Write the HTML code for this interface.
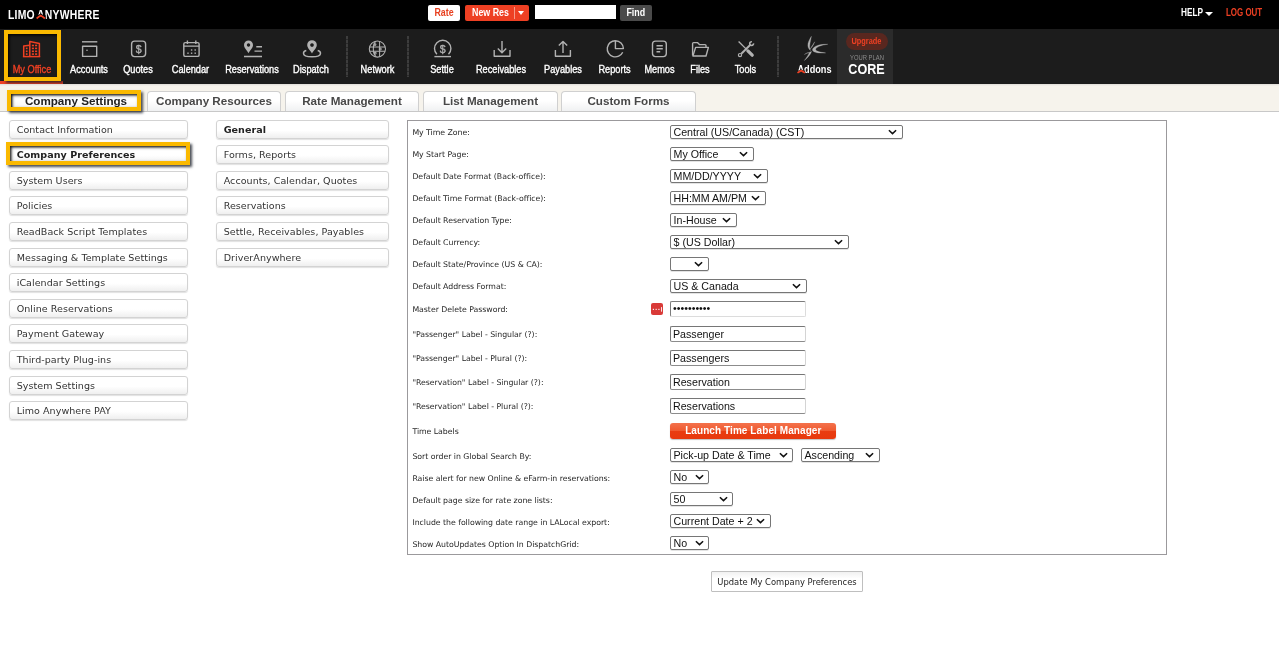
<!DOCTYPE html>
<html lang="en">
<head>
<meta charset="utf-8">
<title>Limo Anywhere - Company Preferences</title>
<style>
*{box-sizing:border-box;}
html,body{margin:0;padding:0;}
body{will-change:transform;width:1279px;height:662px;overflow:hidden;background:#fff;font-family:"Liberation Sans",sans-serif;position:relative;}
#topbar{position:absolute;left:0;top:0;width:1279px;height:29px;background:#000;}
#logo{position:absolute;left:7.8px;top:7.5px;color:#fff;font-weight:bold;font-size:12.1px;line-height:14px;letter-spacing:0.3px;white-space:nowrap;transform:scaleX(.857);transform-origin:0 0;}
#logo .a{position:relative;display:inline-block;margin-left:-1.2px;}
#logo .a svg{position:absolute;left:-1px;top:0;width:11px;height:14px;overflow:visible;}
.tb{position:absolute;top:5px;height:16px;line-height:16px;font-size:10.2px;font-weight:bold;border-radius:2px;text-align:center;white-space:nowrap;}
.t{display:inline-block;transform:scaleX(.87);}
#rate{left:428px;width:32px;background:#fff;color:#e8401f;}
#newres{left:465px;width:64px;background:#ee4023;color:#fff;text-align:left;padding-left:7px;}
#newres .div{position:absolute;left:49px;top:2px;width:1px;height:12px;background:#f59a86;}
#newres .car{position:absolute;left:53px;top:6.2px;width:0;height:0;border-left:3.7px solid transparent;border-right:3.7px solid transparent;border-top:4.2px solid #fff;}
#search{position:absolute;left:535px;top:5px;width:81px;height:14px;background:#fff;}
#find{left:620px;width:32px;background:#4a4a4a;color:#fff;}
#help{position:absolute;left:1180.5px;top:7.2px;color:#fff;font-weight:bold;font-size:10.4px;line-height:12px;white-space:nowrap;}
#help .car{position:absolute;left:24.6px;top:4.7px;width:0;height:0;border-left:4px solid transparent;border-right:4px solid transparent;border-top:4px solid #fff;}
#logout{position:absolute;left:1225.6px;top:7.2px;color:#ee4023;font-weight:bold;font-size:10.4px;line-height:12px;white-space:nowrap;}

#nav{position:absolute;left:0;top:29px;width:1279px;height:55px;background:#1c1c1c;}
.ni{position:absolute;top:0;height:54px;color:#fff;font-size:10px;text-align:center;white-space:nowrap;}
.ni span{position:absolute;left:-20px;right:-20px;top:35px;line-height:12px;text-align:center;transform:scaleX(.92);-webkit-text-stroke:0.35px #fff;}
.sep{position:absolute;top:6.7px;height:41.6px;width:1.5px;background:repeating-linear-gradient(#3d3d3d 0,#3d3d3d 3px,#2a2a2a 3px,#2a2a2a 4px);}
#addons{top:34.6px !important;font-weight:bold;font-size:10.2px;transform:scaleX(.9) !important;-webkit-text-stroke:0 !important;}
#addons .a{position:relative;display:inline-block;}
#addons .a svg{position:absolute;left:0;top:0;width:9px;height:12px;overflow:visible;}
#plan{position:absolute;left:837px;top:0;width:56px;height:55px;background:#2b2b2b;}
#upg{position:absolute;left:9px;top:4px;width:41.5px;height:16.8px;border-radius:8.4px;background:#59271f;color:#ee4023;font-size:8.6px;font-weight:bold;line-height:16.8px;text-align:center;}
#upg span{display:inline-block;transform:scaleX(.86);}
#yp{position:absolute;left:-3.4px;right:-6.6px;top:24.6px;font-size:7px;line-height:8px;color:#8c8c8c;text-align:center;transform:scaleX(.835);}
#core{position:absolute;left:-2.8px;right:-6.2px;top:32px;font-size:14.8px;line-height:16px;font-weight:bold;color:#fff;text-align:center;transform:scaleX(.85);}
#hl1{position:absolute;left:4.3px;top:29.5px;width:56.6px;height:51.3px;border:4px solid #fab900;box-shadow:2px 2px 2.5px rgba(25,30,40,.8),inset 1.5px 1.5px 2.5px rgba(0,0,0,.9);}
#redline{position:absolute;left:0;top:81px;width:62.5px;height:3px;background:#ee4023;}

#tabs{position:absolute;left:0;top:84px;width:1279px;height:28px;background:linear-gradient(#dedcd7 0,#f6f3ec 2px);border-bottom:1px solid #c8c8c8;}
.tab{position:absolute;top:7px;height:20px;border:1px solid #d0d0d0;border-bottom:none;border-radius:4px 4px 0 0;background:linear-gradient(#fff 45%,#f0f1f2);color:#484848;font-weight:bold;font-size:11.65px;line-height:18px;text-align:center;white-space:nowrap;}
#hl2{position:absolute;left:7px;top:90px;width:133.8px;height:20.7px;border:4.2px solid #fab900;box-shadow:2px 2px 2.5px rgba(25,30,40,.8),inset 1.5px 1.5px 2.5px rgba(0,0,0,.9);}

.mi{position:absolute;height:18.6px;border:1px solid #d3d3d3;border-radius:3px;background:linear-gradient(#fff 0%,#fff 55%,#efefef 100%);box-shadow:0 1px 1px rgba(0,0,0,.12);font-family:"DejaVu Sans","Liberation Sans",sans-serif;font-size:9.55px;letter-spacing:0.04px;line-height:17px;color:#333;padding-left:6.7px;white-space:nowrap;}
.mi.l{left:9px;width:179px;}
.mi.r{left:216px;width:173px;}
.mi.b{font-weight:bold;color:#222;}
#hl3{position:absolute;left:6.2px;top:142px;width:183.6px;height:23.3px;border:4px solid #fab900;box-shadow:2px 2px 2.5px rgba(25,30,40,.8),inset 1.5px 1.5px 2.5px rgba(0,0,0,.9);}

#panel{position:absolute;left:407px;top:120px;width:760px;height:435px;border:1px solid #9b999c;background:#fff;}
.lb{position:absolute;left:412.4px;font-family:"DejaVu Sans",sans-serif;font-size:7.8px;letter-spacing:-0.03px;margin-top:0.6px;line-height:12px;color:#262626;white-space:nowrap;}
.sel{position:absolute;left:670px;height:13.8px;border:1px solid #767676;border-radius:2px;box-shadow:0 1px 0 #e3e3e3;background:#fff;font-size:10.67px;line-height:12px;color:#111;padding-left:2.5px;white-space:nowrap;overflow:hidden;}
.sel svg{position:absolute;right:4.6px;top:3.4px;width:9px;height:6px;}
.inp{position:absolute;left:670px;width:135.5px;height:16.3px;border:1px solid;border-color:#767676 #d4d4d4 #8c8c8c #767676;border-radius:2px;background:#fff;font-size:10.67px;line-height:14px;color:#111;padding-left:2px;white-space:nowrap;}
#launch{position:absolute;left:670.4px;top:423.2px;width:165.8px;height:15.8px;border-radius:3px;background:linear-gradient(#f4724c 0%,#ef5a30 48%,#e93c10 52%,#e8380d 100%);color:#fff;font-weight:bold;font-size:10px;letter-spacing:0.08px;line-height:16.3px;text-align:center;box-shadow:0 1px 1px rgba(0,0,0,.25);}
#upd{position:absolute;left:711px;top:571px;width:152px;height:21px;border:1px solid #bfbfbf;border-radius:1px;background:linear-gradient(#f1f1f1 0,#fff 35%);font-family:"DejaVu Sans Condensed","DejaVu Sans",sans-serif;font-size:9.3px;line-height:19px;color:#222;text-align:center;white-space:nowrap;}
.pwd{line-height:12.6px !important;border-color:#7c7c7c #dcdcdc #dcdcdc #7c7c7c !important;}
#pw{position:absolute;left:650.6px;top:302.8px;width:12.4px;height:12.4px;border-radius:2px;background:#d93a38;}
#pw svg{display:block;width:100%;height:100%;}
</style>
</head>
<body>
<div id="topbar">
  <div id="logo">LIMO <span class="a">A<svg viewBox="0 0 11 14"><path d="M-0.5 12 L-0.5 7.2 L2 7.2 Q5.2 5 8.4 7.2 L11 7.2 L11 12 Z" fill="#000"/><path d="M0.4 10.5 Q3 8.5 5.2 7.6 Q7.4 8.5 10 10.5" fill="none" stroke="#ee4023" stroke-width="2"/></svg></span>NYWHERE</div>
  <div class="tb" id="rate"><span class="t">Rate</span></div>
  <div class="tb" id="newres"><span class="t" style="transform-origin:0 50%">New Res</span><i class="div"></i><i class="car"></i></div>
  <div id="search"></div>
  <div class="tb" id="find"><span class="t">Find</span></div>
  <div id="help"><span class="t" style="transform:scaleX(.795);transform-origin:0 50%">HELP</span><i class="car"></i></div>
  <div id="logout"><span class="t" style="transform:scaleX(.765);transform-origin:0 50%">LOG OUT</span></div>
</div>
<div id="nav">
<svg id="icons" width="1279" height="54" viewBox="0 29 1279 54" style="position:absolute;left:0;top:0" fill="none" stroke="#b2b2b2" stroke-width="1.4" stroke-linejoin="round" stroke-linecap="butt"><g stroke="#ee4023" stroke-width="1.5"><path d="M29.8 57 V41.6 L39.4 43.6 V57"/><path d="M23.7 57 V46 L29.8 45.3"/><path d="M22.9 56.6 H40.2"/></g><g fill="#ee4023" stroke="none"><rect x="31.85" y="44.70" width="2.1" height="1.6"/><rect x="31.85" y="47.60" width="2.1" height="1.6"/><rect x="31.85" y="50.50" width="2.1" height="1.6"/><rect x="31.85" y="53.30" width="2.1" height="1.6"/><rect x="35.05" y="44.70" width="2.1" height="1.6"/><rect x="35.05" y="47.60" width="2.1" height="1.6"/><rect x="35.05" y="50.50" width="2.1" height="1.6"/><rect x="35.05" y="53.30" width="2.1" height="1.6"/><rect x="25.85" y="47.60" width="1.7" height="1.6"/><rect x="25.85" y="50.50" width="1.7" height="1.6"/><rect x="25.85" y="53.30" width="1.7" height="1.6"/></g><path d="M82 41.8 H97.3"/><rect x="82.6" y="46.2" width="14.1" height="10.2"/><circle cx="87" cy="50.3" r="0.8" fill="#b2b2b2" stroke="none"/><rect x="131.6" y="41.1" width="14" height="15.5" rx="3"/><text x="138.6" y="52.6" font-family="Liberation Sans, sans-serif" font-size="10.5" text-anchor="middle" fill="#b2b2b2" stroke="#b2b2b2" stroke-width="0.35">$</text><rect x="183.8" y="42.6" width="15.3" height="13.8" rx="1.5"/><path d="M183.8 46.1 H199.1 M187.4 40.5 V44 M195.8 40.5 V44"/><g fill="#b2b2b2" stroke="none"><rect x="187.3" y="52.5" width="1.4" height="1.4"/><rect x="190.9" y="52.5" width="1.4" height="1.4"/><rect x="194.5" y="52.5" width="1.4" height="1.4"/><rect x="190.9" y="49.3" width="1.4" height="1.4"/><rect x="194.5" y="49.3" width="1.4" height="1.4"/></g><path fill="#b2b2b2" stroke="none" fill-rule="evenodd" d="M248.50 53.20 C247.30 50.70 244.00 48.20 244.00 45.00 A4.50 4.50 0 1 1 253.00 45.00 C253.00 48.20 249.70 50.70 248.50 53.20 Z M248.50 43.30 a1.70 1.70 0 1 0 0.01 0 Z"/><path stroke-width="1.4" d="M256.3 46.8 H262 M254.5 51.1 H262 M244 56.5 H262"/><path fill="#b2b2b2" stroke="none" fill-rule="evenodd" d="M312.00 53.40 C310.80 50.90 307.20 48.20 307.20 45.00 A4.80 4.80 0 1 1 316.80 45.00 C316.80 48.20 313.20 50.90 312.00 53.40 Z M312.00 43.20 a1.80 1.80 0 1 0 0.01 0 Z"/><path stroke-width="1.5" d="M306.3 50.4 C304 51 303.5 52.2 303.5 53.2 C303.5 55.4 307.3 56.8 312 56.8 C316.7 56.8 320.5 55.4 320.5 53.2 C320.5 52.2 320 51 317.7 50.4"/><g stroke-width="1.05"><circle cx="377.4" cy="49" r="8.1"/><path d="M369.8 46.9 H385 M369.8 51.2 H385 M379.6 41.2 V56.8 M376 41.2 C372.6 43.5 372.2 54 376.2 56.8"/><circle cx="375" cy="44.6" r="0.9"/><circle cx="380.2" cy="49" r="1"/><circle cx="375.2" cy="53.2" r="0.9"/></g><path d="M436.9 54.3 A8.2 8.2 0 1 1 448.5 54.3"/><path d="M434.4 56.6 H451"/><text x="442.7" y="53" font-family="Liberation Sans, sans-serif" font-size="10.5" text-anchor="middle" fill="#b2b2b2" stroke="#b2b2b2" stroke-width="0.35">$</text><path stroke-width="1.4" d="M494.2 50 V56.2 H510 V50 M502 41 V52.6 M497.8 48.6 L502 52.8 L506.2 48.6"/><path stroke-width="1.4" d="M555.4 50 V56.2 H570.4 V50 M563 53 V41.6 M558.8 45.6 L563 41.4 L567.2 45.6"/><path d="M615.4 40.7 A8.1 8.1 0 1 0 622.7 52.2"/><path d="M615.4 40.7 V48.6 H623.4 A8 8 0 0 0 615.4 40.7 Z"/><rect x="652.5" y="41.1" width="13.8" height="15.5" rx="3"/><path stroke-width="1.4" d="M656.5 45.8 H662.8 M656.5 48.7 H662.8 M656.5 51.7 H660.2"/><path d="M692.6 55.4 V43.6 Q692.6 42.6 693.6 42.6 H697.4 L699.4 44.6 H705 Q706 44.6 706 45.6 V47.4"/><path d="M695.6 47.4 H708.4 L706 56 H692.9 Z"/><path stroke-width="1.3" d="M738.6 41.5 L746.8 49.6"/><path stroke-width="3.3" stroke-linecap="round" d="M747.9 50.9 L752.2 55.2"/><path stroke-width="1.9" d="M750.4 44.8 L741.3 53.8"/><circle cx="740" cy="55.1" r="1.6" stroke-width="1.2"/><path stroke-width="1.6" d="M753.5 43.3 A1.9 1.9 0 1 1 751.9 41.7"/><g fill="#b0b0b0" stroke="#b0b0b0" stroke-width="0.3"><path d="M827.8 44.3 C820 44 813.3 45.8 812.4 50 C813.4 52.8 819 53.4 825.6 52.9 C820 52.2 816 51.3 815.6 49.6 C816 47 821 45.2 827.8 44.3 Z"/><path d="M811.4 36.3 C809.4 39.5 807.5 43 807.9 46 C808.2 48 809.1 49.5 810.5 50.4 C809.7 48.5 809.6 46.7 809.8 45 C810.1 42 810.9 39.4 811.4 36.3 Z"/><path d="M814.7 41.8 C813.2 44.2 811.5 46.6 810 49.2 C811.6 47.8 813.6 45 814.7 41.8 Z"/><path d="M811.6 51.4 C810.6 54.6 807.6 57.9 804.3 60.5 C806.4 58 808.4 55 809.4 52.2 Z"/><path d="M804.4 54.5 C806 53.2 807.6 52.5 809.2 52.5 C807.6 52.9 806 53.6 804.4 54.5 Z"/></g></svg>
  <div class="ni" style="left:12px;width:40px;color:#ee4023"><span style="-webkit-text-stroke-color:#ee4023">My Office</span></div>
  <div class="ni" style="left:70px;width:38px"><span>Accounts</span></div>
  <div class="ni" style="left:123px;width:30px"><span>Quotes</span></div>
  <div class="ni" style="left:172px;width:37px"><span>Calendar</span></div>
  <div class="ni" style="left:225px;width:54px"><span>Reservations</span></div>
  <div class="ni" style="left:293px;width:36px"><span>Dispatch</span></div>
  <div class="sep" style="left:346px"></div>
  <div class="ni" style="left:360px;width:35px"><span>Network</span></div>
  <div class="sep" style="left:407.4px"></div>
  <div class="ni" style="left:430px;width:24px"><span>Settle</span></div>
  <div class="ni" style="left:476px;width:50px"><span>Receivables</span></div>
  <div class="ni" style="left:544px;width:38px"><span>Payables</span></div>
  <div class="ni" style="left:598px;width:33px"><span>Reports</span></div>
  <div class="ni" style="left:644px;width:31px"><span>Memos</span></div>
  <div class="ni" style="left:690px;width:20px"><span>Files</span></div>
  <div class="ni" style="left:734px;width:23px"><span>Tools</span></div>
  <div class="sep" style="left:777.4px"></div>
  <div class="ni" style="left:797px;width:35px"><span id="addons"><b class="a">A<svg viewBox="0 0 9 12"><path d="M-0.6 10 L-0.6 6.4 L1.4 6.4 Q3.7 4.6 6 6.4 L8.2 6.4 L8.2 10 Z" fill="#1c1c1c"/><path d="M-0.4 8.9 Q1.8 7.3 3.7 6.6 Q5.6 7.3 7.8 8.9" fill="none" stroke="#ee4023" stroke-width="1.7"/></svg></b>ddons</span></div>
  <div id="plan"><div id="upg"><span>Upgrade</span></div><div id="yp">YOUR PLAN</div><div id="core">CORE</div></div>
</div>
<div id="redline"></div>
<div id="hl1"></div>
<div id="tabs">
  <div class="tab" style="left:11px;width:130px;color:#222">Company Settings</div>
  <div class="tab" style="left:147px;width:134px">Company Resources</div>
  <div class="tab" style="left:285px;width:134px">Rate Management</div>
  <div class="tab" style="left:423px;width:135px">List Management</div>
  <div class="tab" style="left:561px;width:135px">Custom Forms</div>
</div>
<div id="hl2"></div>

<div class="mi l" style="top:120px">Contact Information</div>
<div class="mi l b" style="top:145px">Company Preferences</div>
<div class="mi l" style="top:171px">System Users</div>
<div class="mi l" style="top:196px">Policies</div>
<div class="mi l" style="top:222px">ReadBack Script Templates</div>
<div class="mi l" style="top:248px">Messaging &amp; Template Settings</div>
<div class="mi l" style="top:273px">iCalendar Settings</div>
<div class="mi l" style="top:299px">Online Reservations</div>
<div class="mi l" style="top:324px">Payment Gateway</div>
<div class="mi l" style="top:350px">Third-party Plug-ins</div>
<div class="mi l" style="top:376px">System Settings</div>
<div class="mi l" style="top:401px">Limo Anywhere PAY</div>
<div id="hl3"></div>

<div class="mi r b" style="top:120px">General</div>
<div class="mi r" style="top:145px">Forms, Reports</div>
<div class="mi r" style="top:171px">Accounts, Calendar, Quotes</div>
<div class="mi r" style="top:196px">Reservations</div>
<div class="mi r" style="top:222px">Settle, Receivables, Payables</div>
<div class="mi r" style="top:248px">DriverAnywhere</div>

<div id="panel"></div>
<div class="lb" style="top:126.5px">My Time Zone:</div>
<div class="lb" style="top:148.3px">My Start Page:</div>
<div class="lb" style="top:170.3px">Default Date Format (Back-office):</div>
<div class="lb" style="top:192.2px">Default Time Format (Back-office):</div>
<div class="lb" style="top:214.3px">Default Reservation Type:</div>
<div class="lb" style="top:236.3px">Default Currency:</div>
<div class="lb" style="top:258.3px">Default State/Province (US &amp; CA):</div>
<div class="lb" style="top:280.5px">Default Address Format:</div>
<div class="lb" style="top:303.5px">Master Delete Password:</div>
<div class="lb" style="top:328.0px">"Passenger" Label - Singular (?):</div>
<div class="lb" style="top:352.0px">"Passenger" Label - Plural (?):</div>
<div class="lb" style="top:376.0px">"Reservation" Label - Singular (?):</div>
<div class="lb" style="top:400.3px">"Reservation" Label - Plural (?):</div>
<div class="lb" style="top:425.7px">Time Labels</div>
<div class="lb" style="top:450.0px">Sort order in Global Search By:</div>
<div class="lb" style="top:472.5px">Raise alert for new Online &amp; eFarm-in reservations:</div>
<div class="lb" style="top:494.5px">Default page size for rate zone lists:</div>
<div class="lb" style="top:516.5px">Include the following date range in LALocal export:</div>
<div class="lb" style="top:538.4px">Show AutoUpdates Option In DispatchGrid:</div>
<div class="sel" style="left:670px;top:125px;width:232.5px;height:14px">Central (US/Canada) (CST)<svg viewBox="0 0 9 6"><path d="M0.9 1.2 L4.5 4.6 L8.1 1.2" fill="none" stroke="#111" stroke-width="1.55"/></svg></div>
<div class="sel" style="left:670px;top:147px;width:83.8px;height:14px">My Office<svg viewBox="0 0 9 6"><path d="M0.9 1.2 L4.5 4.6 L8.1 1.2" fill="none" stroke="#111" stroke-width="1.55"/></svg></div>
<div class="sel" style="left:670px;top:169px;width:97.8px;height:14px">MM/DD/YYYY<svg viewBox="0 0 9 6"><path d="M0.9 1.2 L4.5 4.6 L8.1 1.2" fill="none" stroke="#111" stroke-width="1.55"/></svg></div>
<div class="sel" style="left:670px;top:191px;width:95.5px;height:14px">HH:MM AM/PM<svg viewBox="0 0 9 6"><path d="M0.9 1.2 L4.5 4.6 L8.1 1.2" fill="none" stroke="#111" stroke-width="1.55"/></svg></div>
<div class="sel" style="left:670px;top:213px;width:67.0px;height:14px">In-House<svg viewBox="0 0 9 6"><path d="M0.9 1.2 L4.5 4.6 L8.1 1.2" fill="none" stroke="#111" stroke-width="1.55"/></svg></div>
<div class="sel" style="left:670px;top:235px;width:178.5px;height:14px">$ (US Dollar)<svg viewBox="0 0 9 6"><path d="M0.9 1.2 L4.5 4.6 L8.1 1.2" fill="none" stroke="#111" stroke-width="1.55"/></svg></div>
<div class="sel" style="left:670px;top:257px;width:38.8px;height:14px"><svg viewBox="0 0 9 6"><path d="M0.9 1.2 L4.5 4.6 L8.1 1.2" fill="none" stroke="#111" stroke-width="1.55"/></svg></div>
<div class="sel" style="left:670px;top:279px;width:136.8px;height:14px">US &amp; Canada<svg viewBox="0 0 9 6"><path d="M0.9 1.2 L4.5 4.6 L8.1 1.2" fill="none" stroke="#111" stroke-width="1.55"/></svg></div>
<div class="sel" style="left:670px;top:448px;width:123.3px;height:14px">Pick-up Date &amp; Time<svg viewBox="0 0 9 6"><path d="M0.9 1.2 L4.5 4.6 L8.1 1.2" fill="none" stroke="#111" stroke-width="1.55"/></svg></div>
<div class="sel" style="left:801px;top:448px;width:78.5px;height:14px">Ascending<svg viewBox="0 0 9 6"><path d="M0.9 1.2 L4.5 4.6 L8.1 1.2" fill="none" stroke="#111" stroke-width="1.55"/></svg></div>
<div class="sel" style="left:670px;top:470px;width:39.3px;height:14px">No<svg viewBox="0 0 9 6"><path d="M0.9 1.2 L4.5 4.6 L8.1 1.2" fill="none" stroke="#111" stroke-width="1.55"/></svg></div>
<div class="sel" style="left:670px;top:492px;width:63.3px;height:14px">50<svg viewBox="0 0 9 6"><path d="M0.9 1.2 L4.5 4.6 L8.1 1.2" fill="none" stroke="#111" stroke-width="1.55"/></svg></div>
<div class="sel" style="left:670px;top:514px;width:100.8px;height:14px">Current Date + 2<svg viewBox="0 0 9 6"><path d="M0.9 1.2 L4.5 4.6 L8.1 1.2" fill="none" stroke="#111" stroke-width="1.55"/></svg></div>
<div class="sel" style="left:670px;top:536px;width:39.3px;height:14px">No<svg viewBox="0 0 9 6"><path d="M0.9 1.2 L4.5 4.6 L8.1 1.2" fill="none" stroke="#111" stroke-width="1.55"/></svg></div>
<div id="pw"><svg viewBox="0 0 13 13"><rect x="1.9" y="6.1" width="1.2" height="1.2" fill="#fff"/><rect x="4.8" y="6.1" width="1.2" height="1.2" fill="#fff"/><rect x="7.7" y="6.1" width="1.2" height="1.2" fill="#fff"/><rect x="10.6" y="4.3" width="0.9" height="4.8" fill="#fff"/></svg></div>
<div class="inp pwd" style="top:301px">&bull;&bull;&bull;&bull;&bull;&bull;&bull;&bull;&bull;&bull;</div>
<div class="inp" style="top:325.5px">Passenger</div>
<div class="inp" style="top:349.7px">Passengers</div>
<div class="inp" style="top:374.0px">Reservation</div>
<div class="inp" style="top:398.2px">Reservations</div>
<div id="launch">Launch Time Label Manager</div>
<div id="upd">Update My Company Preferences</div>
</body>
</html>
